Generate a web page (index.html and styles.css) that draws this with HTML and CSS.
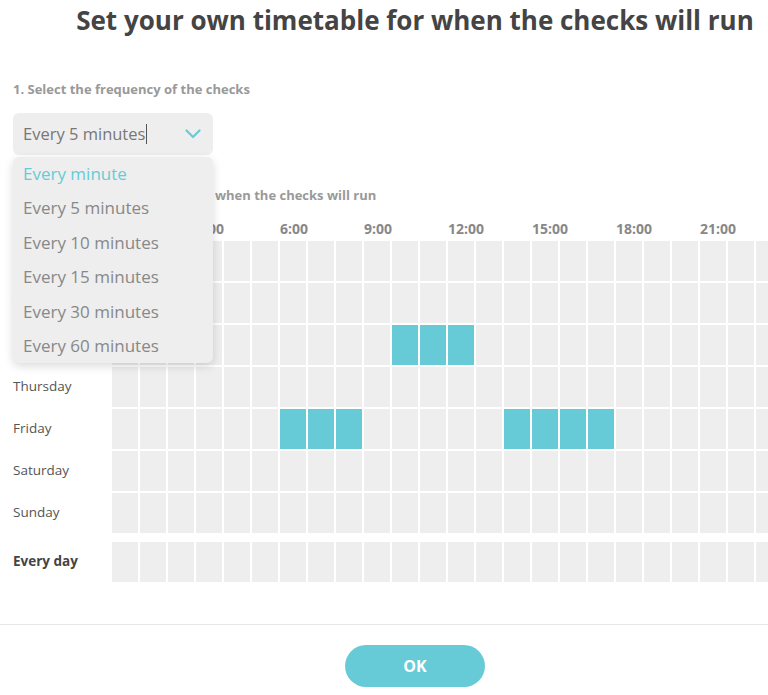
FILE: index.html
```html
<!DOCTYPE html>
<html lang="en">
<head>
    <meta charset="UTF-8">
    <meta name="viewport" content="width=device-width, initial-scale=1.0">
    <title>Timetable - Checks</title>
    <link rel="stylesheet" href="styles.css">
</head>
<body>
    <div class="modal">
        <h1 class="title">Set your own timetable for when the checks will run</h1>

        <div class="content">
            <div class="step-label">1. Select the frequency of the checks</div>

            <div class="select-wrap">
                <div class="select-box">
                    <span class="select-value">Every 5 minutes</span>
                    <svg class="chevron" width="16" height="10" viewBox="0 0 16 10">
                        <path d="M1.5 1.5 L8 8 L14.5 1.5" fill="none" stroke="#66cbd6" stroke-width="2.2" stroke-linecap="round" stroke-linejoin="round"/>
                    </svg>
                </div>
                <ul class="dropdown">
                    <li class="active">Every minute</li>
                    <li>Every 5 minutes</li>
                    <li>Every 10 minutes</li>
                    <li>Every 15 minutes</li>
                    <li>Every 30 minutes</li>
                    <li>Every 60 minutes</li>
                </ul>
            </div>

            <div class="step-label step-two">2. Select the days and the time when the checks will run</div>

            <div class="schedule" id="schedule">
                <div class="row hours" id="hours"></div>
            </div>
        </div>

        <div class="footer">
            <button class="ok-btn">OK</button>
        </div>
    </div>

    <script>
        // Days with the hours that are switched on
        const days = [
            { name: 'Monday', on: [] },
            { name: 'Tuesday', on: [] },
            { name: 'Wednesday', on: [10, 11, 12] },
            { name: 'Thursday', on: [] },
            { name: 'Friday', on: [6, 7, 8, 14, 15, 16, 17] },
            { name: 'Saturday', on: [] },
            { name: 'Sunday', on: [] },
            { name: 'Every day', on: [], all: true }
        ];

        const schedule = document.getElementById('schedule');
        const hours = document.getElementById('hours');

        hours.innerHTML = '<div class="day"></div>';
        for (let h = 0; h < 24; h += 3) {
            hours.innerHTML += `<div class="hour">${h}:00</div>`;
        }

        days.forEach(day => {
            const row = document.createElement('div');
            row.className = day.all ? 'row every-day' : 'row';
            let cells = `<div class="day">${day.name}</div>`;
            for (let h = 0; h < 24; h++) {
                cells += `<div class="cell${day.on.includes(h) ? ' on' : ''}"></div>`;
            }
            row.innerHTML = cells;
            schedule.appendChild(row);
        });
    </script>
</body>
</html>
```

FILE: styles.css
```css
* {
    margin: 0;
    padding: 0;
    box-sizing: border-box;
    font-family: 'Open Sans', sans-serif;
}

body {
    background: white;
    overflow: hidden;
}

.modal {
    width: 830px;
}

.title {
    font-size: 26px;
    line-height: 36px;
    font-weight: 700;
    color: #444;
    text-align: center;
    padding-top: 2px;
}

.content {
    padding: 0 0 0 13px;
    margin-top: 43px;
}

.step-label {
    font-size: 13px;
    line-height: 16px;
    font-weight: 700;
    color: #999;
}

.step-two {
    margin-top: 32px;
}

.select-wrap {
    position: relative;
    width: 200px;
    margin-top: 16px;
}

.select-box {
    height: 42px;
    background: #eee;
    border-radius: 6px;
    padding: 0 12px 0 10px;
    display: flex;
    align-items: center;
    justify-content: space-between;
}

.select-value {
    font-size: 16.5px;
    color: #777;
    border-right: 1px solid #555;
    padding-right: 1px;
    line-height: 20px;
}

.chevron {
    display: block;
}

.dropdown {
    list-style: none;
    position: absolute;
    top: 44px;
    left: 0;
    width: 200px;
    height: 206px;
    background: #eee;
    border-radius: 6px;
    box-shadow: 0 3px 10px rgba(0, 0, 0, 0.15);
    z-index: 2;
}

.dropdown li {
    height: 34.4px;
    line-height: 34.4px;
    padding-left: 10px;
    font-size: 17px;
    color: #888;
}

.dropdown li.active {
    color: #66cbd6;
}

.schedule {
    display: flex;
    flex-direction: column;
    gap: 2px;
    margin-top: 17px;
}

.row {
    display: grid;
    grid-template-columns: 97px repeat(24, 26px);
    column-gap: 2px;
    height: 40px;
}

.row.hours {
    height: 19px;
}

.hour {
    grid-column: span 3;
    font-size: 14px;
    line-height: 18px;
    font-weight: 700;
    color: #888;
}

.day {
    font-size: 13.5px;
    color: #555;
    display: flex;
    align-items: center;
    padding-bottom: 2px;
}

.every-day {
    margin-top: 7px;
}

.every-day .day {
    font-weight: 700;
    color: #444;
}

.cell {
    background: #eee;
}

.cell.on {
    background: #66cbd6;
}

.footer {
    margin-top: 42px;
    border-top: 1px solid #e6e6e6;
    padding-top: 20px;
    display: flex;
    justify-content: center;
}

.ok-btn {
    width: 140px;
    height: 42px;
    border: none;
    border-radius: 21px;
    background: #66cbd6;
    color: white;
    font-size: 16px;
    font-weight: 700;
    cursor: pointer;
}
```
